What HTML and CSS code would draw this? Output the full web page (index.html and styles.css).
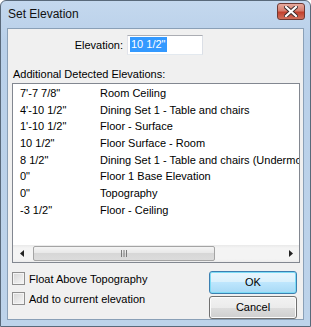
FILE: index.html
```html
<!doctype html>
<html>
<head>
<meta charset="utf-8">
<title>Set Elevation</title>
<link rel="stylesheet" href="styles.css">
</head>

<body>
<div class="win">
    <div class="titlebar">
        <span class="title">Set Elevation</span>
        <div class="close">
            <svg width="14" height="11" viewBox="0 0 14 11">
                <path d="M2 1 L12 10 M12 1 L2 10" stroke="#3a2a2a" stroke-width="4" stroke-linecap="square"/>
                <path d="M2 1 L12 10 M12 1 L2 10" stroke="#fff" stroke-width="2.2" stroke-linecap="square"/>
            </svg>
        </div>
    </div>

    <div class="client">
        <div class="elev-row">
            <span class="elev-label">Elevation:</span>
            <div class="input"><span class="sel">10 1/2"</span></div>
        </div>

        <div class="list-label">Additional Detected Elevations:</div>

        <div class="listbox">
            <div class="rows">
                <div class="row"><span class="c1">7'-7 7/8"</span><span class="c2">Room Ceiling</span></div>
                <div class="row"><span class="c1">4'-10 1/2"</span><span class="c2">Dining Set 1 - Table and chairs</span></div>
                <div class="row"><span class="c1">1'-10 1/2"</span><span class="c2">Floor - Surface</span></div>
                <div class="row"><span class="c1">10 1/2"</span><span class="c2">Floor Surface - Room</span></div>
                <div class="row"><span class="c1">8 1/2"</span><span class="c2">Dining Set 1 - Table and chairs (Undermount)</span></div>
                <div class="row"><span class="c1">0"</span><span class="c2">Floor 1 Base Elevation</span></div>
                <div class="row"><span class="c1">0"</span><span class="c2">Topography</span></div>
                <div class="row"><span class="c1">-3 1/2"</span><span class="c2">Floor - Ceiling</span></div>
            </div>

            <!-- horizontal scroll bar -->
            <div class="hscroll">
                <div class="arrow">
                    <svg width="4" height="7" viewBox="0 0 4 7"><path d="M4 0 L0 3.5 L4 7 Z" fill="#222"/></svg>
                </div>
                <div class="track">
                    <div class="thumb">
                        <svg width="8" height="7" viewBox="0 0 8 7">
                            <path d="M1.5 0 V7 M4 0 V7 M6.5 0 V7" stroke="#7a7a7a" stroke-width="1"/>
                        </svg>
                    </div>
                </div>
                <div class="arrow">
                    <svg width="4" height="7" viewBox="0 0 4 7"><path d="M0 0 L4 3.5 L0 7 Z" fill="#222"/></svg>
                </div>
            </div>
        </div>

        <div class="bottom">
            <div class="checks">
                <label class="check"><span class="box"></span>Float Above Topography</label>
                <label class="check"><span class="box"></span>Add to current elevation</label>
            </div>
            <div class="buttons">
                <div class="btn btn-default">OK</div>
                <div class="btn">Cancel</div>
            </div>
        </div>
    </div>
</div>
</body>
</html>
```

FILE: styles.css
```css
html,body { padding:0; margin:0; }
body { font-family:"Liberation Sans", Arial, sans-serif; font-size:11px; color:#000; }

.win { width:311px; height:327px; box-sizing:border-box; display:flex; flex-direction:column; border:1px solid #59697a; border-radius:6px 6px 0 0; padding:0 6px 6px; background:linear-gradient(#c4d8ee, #b9d0e9 40px, #bdd3ea); }

.titlebar { height:27px; display:flex; align-items:center; justify-content:space-between; }
.title { font-size:12px; padding-left:1px; margin-top:-1px; color:#111; }
.close { width:28px; height:17px; margin-top:-6px; margin-right:-1px; box-sizing:border-box; border:1px solid #6e3a34; border-radius:3px; display:flex; align-items:center; justify-content:center; background:linear-gradient(#e6aa9e, #d77d6d 45%, #c2412d 55%, #d0705c); }

.client { flex:1; display:flex; flex-direction:column; border:1px solid #8aa0b7; background:#f0f0f0; }

.elev-row { display:flex; align-items:center; margin-top:6px; height:20px; }
.elev-label { width:115px; text-align:right; }
.input { width:76px; height:20px; margin-left:4px; box-sizing:border-box; border:1px solid #abadb3; border-color:#abadb3 #dbdfe6 #e3e9ef #e2e3ea; background:#fff; padding:1px 0 0 2px; }
.sel { display:inline-block; background:#3399ff; color:#fff; line-height:15px; padding:0 1px; }

.list-label { margin-top:13px; line-height:13px; padding-left:5px; }

.listbox { width:288px; height:180px; margin:2px 0 0 4px; box-sizing:border-box; border:1px solid #828790; background:#fff; display:flex; flex-direction:column; overflow:hidden; }
.rows { flex:1; padding-top:1px; }
.row { height:16.7px; line-height:16.7px; white-space:nowrap; display:flex; }
.c1 { width:80px; padding-left:7px; flex:none; }
.c2 { flex:none; }

.hscroll { height:17px; display:flex; background:linear-gradient(#e9e9e9, #f4f4f4 3px, #f4f4f4 14px, #ececec); }
.arrow { width:17px; display:flex; align-items:center; justify-content:center; }
.track { flex:1; padding:1px 2px 1px 3px; }
.thumb { width:182px; height:15px; box-sizing:border-box; border:1px solid #a4a4a4; border-radius:2px; display:flex; align-items:center; justify-content:center; background:linear-gradient(#f4f4f4, #e7e7e7 50%, #d7d7d7 50%, #dcdcdc); }

.bottom { display:flex; margin-top:8px; }
.checks { flex:1; padding:1px 0 0 4px; display:flex; flex-direction:column; gap:7px; }
.check { display:flex; align-items:center; height:13px; }
.box { width:13px; height:13px; box-sizing:border-box; border:1px solid #8f8f8f; margin-right:4px; background:linear-gradient(135deg, #d6d6d6, #f6f6f6); box-shadow:inset 0 0 0 1px #f4f4f4; }

.buttons { width:88px; margin-right:6px; display:flex; flex-direction:column; gap:2px; }
.btn { height:23px; box-sizing:border-box; border:1px solid #707070; border-radius:3px; text-align:center; line-height:21px; background:linear-gradient(#f2f2f2, #ebebeb 50%, #dddddd 50%, #cfcfcf); box-shadow:inset 0 0 0 1px #fcfcfc; }
.btn-default { border-color:#3c7fb1; background:linear-gradient(#e9f6fd, #d9f0fc 50%, #bee6fd 50%, #a7d9f5); box-shadow:inset 0 0 0 1px #7ddcf5; }
```
